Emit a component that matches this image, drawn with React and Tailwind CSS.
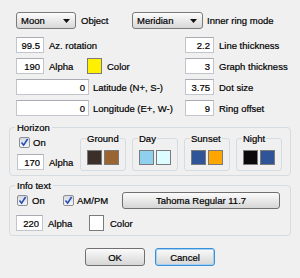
import React from "react";

const Field = ({ value, w }) => (
  <input
    readOnly
    value={value}
    className={`h-[16px] ${w} shrink-0 border border-[#c2c6cc] border-t-[#a9adb3] bg-white px-[3px] text-right outline-none`}
  />
);

const Swatch = ({ color, w = "w-[15px]", h = "h-[16px]" }) => (
  <span className={`block ${w} ${h} shrink-0 border border-[#7b7b7b]`} style={{ backgroundColor: color }} />
);

const Dropdown = ({ label, w }) => (
  <div className={`flex h-[17px] ${w} shrink-0 items-center justify-between rounded-[3px] border border-[#7a7a7a] bg-linear-to-b from-[#fcfcfc] to-[#d8d8d8] pl-[4px] pr-[5px]`}>
    <span>{label}</span>
    <svg width="7" height="4" viewBox="0 0 7 4">
      <path d="M0 0h7L3.5 4z" fill="#111" />
    </svg>
  </div>
);

const Check = () => (
  <span className="flex h-[11px] w-[11px] shrink-0 items-center justify-center rounded-[2px] border border-[#8e9093] bg-linear-to-b from-[#d6dae0] to-[#f5f6f8]">
    <svg width="9" height="9" viewBox="0 0 9 9">
      <path d="M1.5 4.5 L3.6 7.2 L7.6 1" fill="none" stroke="#2a4fb8" strokeWidth="1.6" />
    </svg>
  </span>
);

const Btn = ({ children, w, focus }) => (
  <div
    className={`flex h-[18px] ${w} items-center justify-center rounded-[3px] border bg-linear-to-b from-[#fbfbfb] to-[#d6d6d6] ${
      focus ? "border-[#3d8fd6] shadow-[inset_0_0_0_1px_#9fd0f5]" : "border-[#707070]"
    }`}
  >
    {children}
  </div>
);

const Sub = ({ title, a, b }) => (
  <fieldset className="w-[46px] shrink-0 rounded-[3px] border border-[#d4dbe1] pb-[5px] pl-[6px]">
    <legend className="-ml-[1px] px-[1px]">{title}</legend>
    <div className="flex gap-[2px] pt-[6px]">
      <Swatch color={a} h="h-[15px]" />
      <Swatch color={b} h="h-[15px]" />
    </div>
  </fieldset>
);

export default function App() {
  return (
    <div className="h-[278px] w-[300px] overflow-hidden bg-[#f0f0f0] font-['Liberation_Sans',Arial,sans-serif] text-[9.5px] leading-[11px] text-black [-webkit-text-stroke:0.2px_#000]">
      <div className="pl-[16px] pt-[12px]">
        <div className="flex h-[17px] items-center">
          <div className="flex w-[116px] items-center gap-[5px]">
            <Dropdown label="Moon" w="w-[60px]" />
            <span>Object</span>
          </div>
          <Dropdown label="Meridian" w="w-[71px]" />
          <span className="ml-[4px]">Inner ring mode</span>
        </div>

        <div className="mt-[8px] flex flex-col gap-[5px]">
          <div className="flex h-[16px] items-center">
            <div className="flex w-[169px] items-center gap-[5px]">
              <Field value="99.5" w="w-[28px]" />
              <span>Az. rotation</span>
            </div>
            <Field value="2.2" w="w-[29px]" />
            <span className="ml-[5px]">Line thickness</span>
          </div>
          <div className="flex h-[16px] items-center">
            <div className="flex w-[169px] items-center">
              <Field value="190" w="w-[28px]" />
              <span className="ml-[5px] w-[38px]">Alpha</span>
              <Swatch color="#fff000" />
              <span className="ml-[5px]">Color</span>
            </div>
            <Field value="3" w="w-[29px]" />
            <span className="ml-[5px]">Graph thickness</span>
          </div>
          <div className="flex h-[16px] items-center">
            <div className="flex w-[169px] items-center gap-[4px]">
              <Field value="0" w="w-[73px]" />
              <span>Latitude (N+, S-)</span>
            </div>
            <Field value="3.75" w="w-[29px]" />
            <span className="ml-[5px]">Dot size</span>
          </div>
          <div className="flex h-[16px] items-center">
            <div className="flex w-[169px] items-center gap-[4px]">
              <Field value="0" w="w-[73px]" />
              <span>Longitude (E+, W-)</span>
            </div>
            <Field value="9" w="w-[29px]" />
            <span className="ml-[5px]">Ring offset</span>
          </div>
        </div>
      </div>

      <fieldset className="mx-[9px] mt-[6px] rounded-[4px] border border-[#d4dbe1] pb-[4px] pl-[7px]">
        <legend className="-ml-[2px] px-[2px]">Horizon</legend>
        <div className="flex items-start">
          <div className="flex w-[63px] shrink-0 flex-col">
            <div className="mt-[4px] flex items-center gap-[3px] pl-[2px]">
              <Check />
              <span>On</span>
            </div>
            <div className="mt-[6px] flex items-center gap-[5px]">
              <Field value="170" w="w-[27px]" />
              <span>Alpha</span>
            </div>
          </div>
          <div className="flex gap-[6px]">
            <Sub title="Ground" a="#3b3029" b="#9a6530" />
            <Sub title="Day" a="#8ed0ee" b="#dcfcff" />
            <Sub title="Sunset" a="#2f5598" b="#ffa500" />
            <Sub title="Night" a="#0b0809" b="#2f5598" />
          </div>
        </div>
      </fieldset>

      <fieldset className="mx-[9px] mt-[4px] rounded-[4px] border border-[#d4dbe1] pb-[4px] pl-[7px]">
        <legend className="-ml-[2px] px-[2px]">Info text</legend>
        <div className="flex items-center pt-[1px]">
          <div className="flex w-[46px] items-center gap-[4px]">
            <Check />
            <span>On</span>
          </div>
          <div className="flex w-[59px] items-center gap-[3px]">
            <Check />
            <span>AM/PM</span>
          </div>
          <div className="flex h-[17px] w-[158px] items-center justify-center rounded-[3px] border border-[#707070] bg-linear-to-b from-[#fbfbfb] to-[#d6d6d6]">
            Tahoma Regular 11.7
          </div>
        </div>
        <div className="mt-[6px] flex items-center">
          <div className="-ml-[1px]">
            <Field value="220" w="w-[27px]" />
          </div>
          <span className="ml-[5px] w-[41px]">Alpha</span>
          <Swatch color="#ffffff" />
          <span className="ml-[6px]">Color</span>
        </div>
      </fieldset>

      <div className="mt-[12px] flex justify-center gap-[10px]">
        <Btn w="w-[60px]">OK</Btn>
        <Btn w="w-[60px]" focus>
          Cancel
        </Btn>
      </div>
    </div>
  );
}
